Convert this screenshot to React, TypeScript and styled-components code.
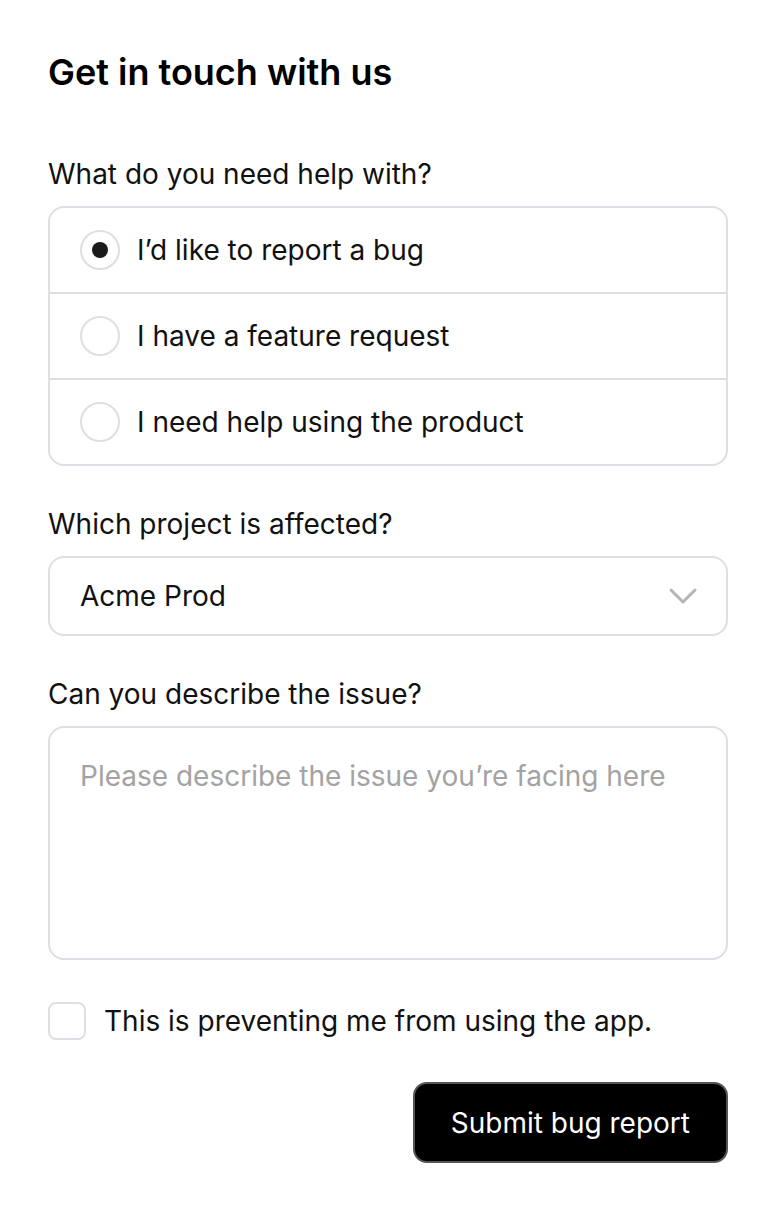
import styled, { createGlobalStyle } from 'styled-components';

const GlobalStyle = createGlobalStyle`
  body {
    margin: 0;
    background: #ffffff;
    font-family: Inter, "Noto Sans", sans-serif;
    color: #111111;
  }
`;

const Page = styled.form`
  width: 680px;
  padding: 48px 48px 40px;
  display: flex;
  flex-direction: column;
`;

const Title = styled.h1`
  margin: 0 0 62px;
  font-size: 36px;
  line-height: 48px;
  font-weight: 600;
  color: #000;
`;

const Field = styled.div`
  display: flex;
  flex-direction: column;
  gap: 16px;
  margin-bottom: 42px;
`;

const Label = styled.label`
  font-size: 28px;
  line-height: 32px;
  color: #111;
`;

const RadioGroup = styled.div`
  border: 2px solid #dedee4;
  border-radius: 16px;
  display: flex;
  flex-direction: column;
`;

const RadioRow = styled.label`
  height: 84px;
  display: flex;
  align-items: center;
  gap: 17px;
  padding: 0 30px;
  font-size: 28px;
  color: #111;
  & + & {
    border-top: 2px solid #dedee4;
  }
`;

const RadioCircle = styled.span<{ $checked?: boolean }>`
  width: 40px;
  height: 40px;
  box-sizing: border-box;
  border: 2px solid #dedee4;
  border-radius: 50%;
  display: flex;
  align-items: center;
  justify-content: center;
  &::after {
    content: '';
    width: 16px;
    height: 16px;
    border-radius: 50%;
    background: #1a1a1a;
    display: ${(p) => (p.$checked ? 'block' : 'none')};
  }
`;

const SelectBox = styled.div`
  height: 80px;
  box-sizing: border-box;
  border: 2px solid #dedee4;
  border-radius: 16px;
  display: flex;
  align-items: center;
  justify-content: space-between;
  padding: 0 28px 0 30px;
  font-size: 28px;
  color: #111;
`;

const TextArea = styled.textarea`
  height: 234px;
  box-sizing: border-box;
  border: 2px solid #dedee4;
  border-radius: 16px;
  padding: 30px;
  font-family: inherit;
  font-size: 28px;
  line-height: 36px;
  color: #111;
  resize: none;
  outline: none;
  &::placeholder {
    color: #a3a3a3;
  }
`;

const CheckRow = styled.label`
  display: flex;
  align-items: center;
  gap: 18px;
  font-size: 28px;
  color: #111;
  margin-bottom: 42px;
`;

const CheckBox = styled.span`
  width: 38px;
  height: 38px;
  flex-shrink: 0;
  box-sizing: border-box;
  border: 2px solid #dedee4;
  border-radius: 8px;
`;

const Actions = styled.div`
  display: flex;
  justify-content: flex-end;
`;

const SubmitButton = styled.button`
  height: 81px;
  padding: 0 36px;
  background: #000;
  color: #fff;
  border: 2px solid #555;
  border-radius: 14px;
  font-family: inherit;
  font-size: 28px;
`;

const options = [
  { label: 'I’d like to report a bug', checked: true },
  { label: 'I have a feature request', checked: false },
  { label: 'I need help using the product', checked: false },
];

export default function App() {
  return (
    <>
      <GlobalStyle />
      <Page>
        <Title>Get in touch with us</Title>
        <Field>
          <Label>What do you need help with?</Label>
          <RadioGroup>
            {options.map((o) => (
              <RadioRow key={o.label}>
                <RadioCircle $checked={o.checked} />
                {o.label}
              </RadioRow>
            ))}
          </RadioGroup>
        </Field>
        <Field>
          <Label>Which project is affected?</Label>
          <SelectBox>
            Acme Prod
            <svg width="30" height="18" viewBox="0 0 30 18" fill="none">
              <path d="M3 3l12 12 12-12" stroke="#b5b5b5" strokeWidth="3" strokeLinecap="round" strokeLinejoin="round" />
            </svg>
          </SelectBox>
        </Field>
        <Field>
          <Label>Can you describe the issue?</Label>
          <TextArea placeholder="Please describe the issue you’re facing here" />
        </Field>
        <CheckRow>
          <CheckBox />
          This is preventing me from using the app.
        </CheckRow>
        <Actions>
          <SubmitButton type="button">Submit bug report</SubmitButton>
        </Actions>
      </Page>
    </>
  );
}
